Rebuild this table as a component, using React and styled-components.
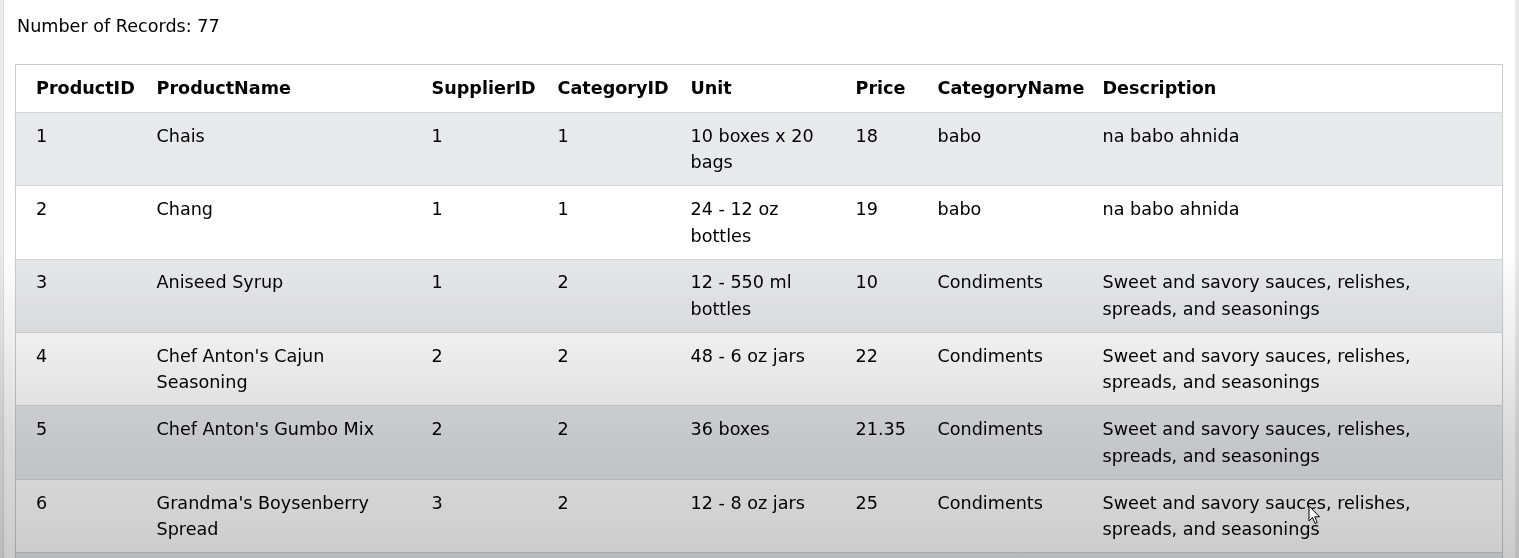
import styled, { createGlobalStyle } from "styled-components";

const GlobalStyle = createGlobalStyle`
  html, body {
    margin: 0;
    padding: 0;
    background: #ffffff;
  }
  body {
    font-family: "DejaVu Sans", Verdana, sans-serif;
    font-size: 17.6px;
    line-height: 26.5px;
    color: #000;
  }
`;

const Frame = styled.div`
  display: flex;
  min-height: 558px;
  position: relative;
  overflow: hidden;
`;

const LeftEdge = styled.div`
  width: 3px;
  flex: none;
  background: #ebebeb;
  border-right: 1px solid #dcdcdc;
`;

const Scrollbar = styled.div`
  width: 6px;
  flex: none;
  background: linear-gradient(to right, #ececec 0 50%, #e2e2e2 50% 100%);
`;

const Main = styled.main`
  flex: 1;
  padding: 13px 12px 0 11px;
`;

const Count = styled.div`
  padding-left: 2px;
  margin-bottom: 24px;
`;

const Table = styled.table`
  width: 1487px;
  border-collapse: collapse;
  table-layout: fixed;
  border: 1px solid #cccccc;
`;

const Row = styled.tr`
  background: ${(p) => (p.$striped ? "#e8e9eb" : "#ffffff")};
  border-bottom: 1px solid #d6d6d6;
`;

const Head = styled.th`
  text-align: left;
  vertical-align: top;
  font-weight: bold;
  padding: 10.6px 10px 10.4px;
  &:first-child {
    padding-left: 20px;
  }
`;

const Cell = styled.td`
  text-align: left;
  vertical-align: top;
  padding: 9.7px 10px;
  &:first-child {
    padding-left: 20px;
  }
  &:last-child {
    padding-right: 28px;
  }
`;

const Vignette = styled.div`
  position: absolute;
  inset: 0;
  pointer-events: none;
  mix-blend-mode: multiply;
  background: linear-gradient(
    to bottom,
    #ffffff 0px,
    #ffffff 250px,
    #f6f6f6 295px,
    #e9e9e9 368px,
    #dadada 440px,
    #d2d2d2 515px,
    #cbcbcb 558px
  );
`;

const Cursor = styled.svg`
  position: absolute;
  left: 1308px;
  top: 505px;
  pointer-events: none;
`;

const columns = [
  { key: "ProductID", width: 131 },
  { key: "ProductName", width: 275 },
  { key: "SupplierID", width: 126 },
  { key: "CategoryID", width: 133 },
  { key: "Unit", width: 165 },
  { key: "Price", width: 82 },
  { key: "CategoryName", width: 165 },
  { key: "Description", width: 410 },
];

const condiments = "Sweet and savory sauces, relishes, spreads, and seasonings";

const products = [
  [1, "Chais", 1, 1, "10 boxes x 20 bags", 18, "babo", "na babo ahnida"],
  [2, "Chang", 1, 1, "24 - 12 oz bottles", 19, "babo", "na babo ahnida"],
  [3, "Aniseed Syrup", 1, 2, "12 - 550 ml bottles", 10, "Condiments", condiments],
  [4, "Chef Anton's Cajun Seasoning", 2, 2, "48 - 6 oz jars", 22, "Condiments", condiments],
  [5, "Chef Anton's Gumbo Mix", 2, 2, "36 boxes", 21.35, "Condiments", condiments],
  [6, "Grandma's Boysenberry Spread", 3, 2, "12 - 8 oz jars", 25, "Condiments", condiments],
  [7, "Uncle Bob's Organic Dried Pears", 3, 7, "12 - 1 lb pkgs.", 30, "Produce", "Dried fruit and bean curd"],
];

export default function App() {
  return (
    <>
      <GlobalStyle />
      <Frame>
        <LeftEdge />
        <Main>
          <Count>Number of Records: 77</Count>
          <Table>
            <colgroup>
              {columns.map((c) => (
                <col key={c.key} style={{ width: c.width }} />
              ))}
            </colgroup>
            <tbody>
              <Row>
                {columns.map((c) => (
                  <Head key={c.key}>{c.key}</Head>
                ))}
              </Row>
              {products.map((p, i) => (
                <Row key={p[0]} $striped={i % 2 === 0}>
                  {p.map((v, j) => (
                    <Cell key={j}>{v}</Cell>
                  ))}
                </Row>
              ))}
            </tbody>
          </Table>
        </Main>
        <Scrollbar />
        <Vignette />
        <Cursor width="13" height="21" viewBox="0 0 13 21">
          <path
            d="M1 1 L1 16 L4.5 12.5 L7 18.5 L9.2 17.6 L6.8 11.8 L11.5 11.8 Z"
            fill="#fff"
            stroke="#000"
            strokeWidth="1"
            strokeLinejoin="round"
          />
        </Cursor>
      </Frame>
    </>
  );
}
